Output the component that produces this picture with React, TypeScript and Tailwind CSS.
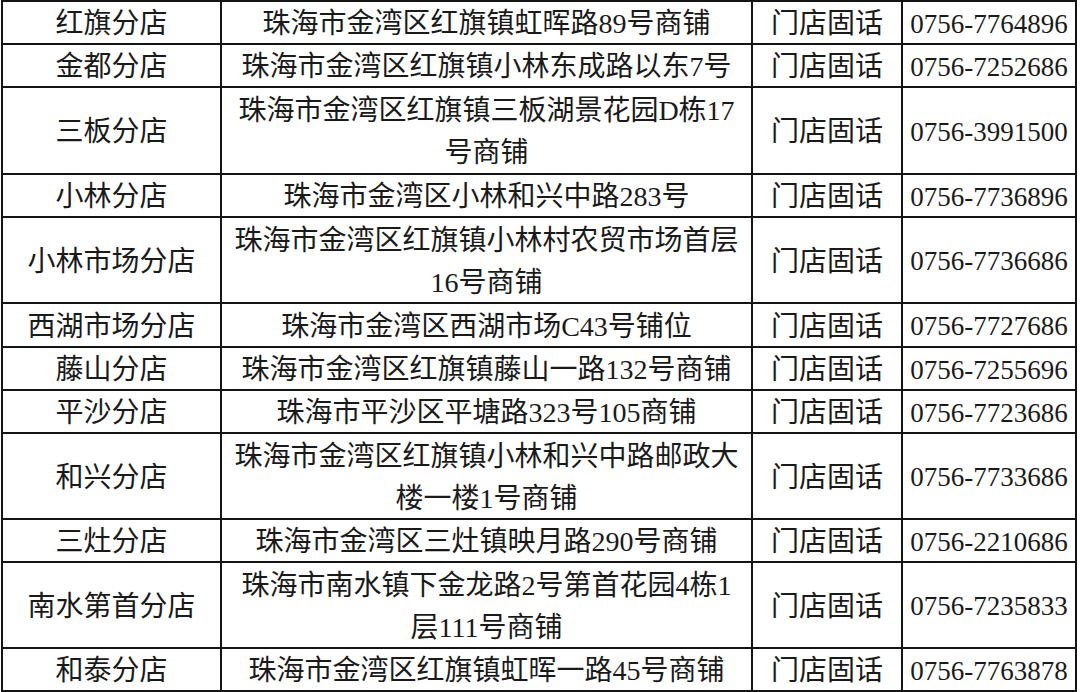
import React from 'react'

type Store = {
  name: string
  addr: string[]
  phone: string
  h: string
}

const stores: Store[] = [
  { name: '红旗分店', addr: ['珠海市金湾区红旗镇虹晖路89号商铺'], phone: '0756-7764896', h: 'h-[43px]' },
  { name: '金都分店', addr: ['珠海市金湾区红旗镇小林东成路以东7号'], phone: '0756-7252686', h: 'h-[43px]' },
  { name: '三板分店', addr: ['珠海市金湾区红旗镇三板湖景花园D栋17', '号商铺'], phone: '0756-3991500', h: 'h-[87px]' },
  { name: '小林分店', addr: ['珠海市金湾区小林和兴中路283号'], phone: '0756-7736896', h: 'h-[43px]' },
  { name: '小林市场分店', addr: ['珠海市金湾区红旗镇小林村农贸市场首层', '16号商铺'], phone: '0756-7736686', h: 'h-[86px]' },
  { name: '西湖市场分店', addr: ['珠海市金湾区西湖市场C43号铺位'], phone: '0756-7727686', h: 'h-[44px]' },
  { name: '藤山分店', addr: ['珠海市金湾区红旗镇藤山一路132号商铺'], phone: '0756-7255696', h: 'h-[43px]' },
  { name: '平沙分店', addr: ['珠海市平沙区平塘路323号105商铺'], phone: '0756-7723686', h: 'h-[43px]' },
  { name: '和兴分店', addr: ['珠海市金湾区红旗镇小林和兴中路邮政大', '楼一楼1号商铺'], phone: '0756-7733686', h: 'h-[86px]' },
  { name: '三灶分店', addr: ['珠海市金湾区三灶镇映月路290号商铺'], phone: '0756-2210686', h: 'h-[43px]' },
  { name: '南水第首分店', addr: ['珠海市南水镇下金龙路2号第首花园4栋1', '层111号商铺'], phone: '0756-7235833', h: 'h-[86px]' },
  { name: '和泰分店', addr: ['珠海市金湾区红旗镇虹晖一路45号商铺'], phone: '0756-7763878', h: 'h-[43px]' },
]

const cell = 'flex flex-col items-center justify-center text-center pt-[3px] border-r-2 border-b-2 border-[#151515]'

export default function App() {
  return (
    <div className="w-[1080px] h-[692px] bg-white overflow-hidden">
      <div className="ml-[1px] w-[1076px] grid grid-cols-[219px_531px_150px_174px] border-l-2 border-t-2 border-[#151515] text-[28px] text-[#1a1a1a] font-['Liberation_Serif','Noto_Sans_CJK_SC',serif]">
        {stores.map((s) => (
          <React.Fragment key={s.name}>
            <div className={`${cell} ${s.h}`}>{s.name}</div>
            <div className={`${cell} ${s.h} leading-[42px]`}>
              {s.addr.map((line) => (
                <span key={line} className="whitespace-nowrap">
                  {line}
                </span>
              ))}
            </div>
            <div className={`${cell} ${s.h}`}>门店固话</div>
            <div className={`${cell} ${s.h} text-[27px]`}>{s.phone}</div>
          </React.Fragment>
        ))}
      </div>
    </div>
  )
}
